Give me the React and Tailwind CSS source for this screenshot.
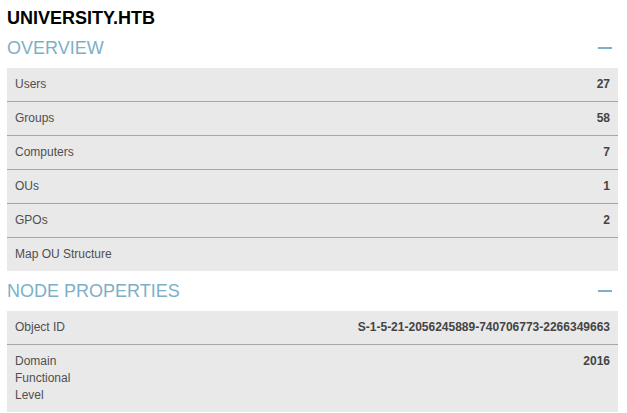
const overview = [
  { label: "Users", value: "27" },
  { label: "Groups", value: "58" },
  { label: "Computers", value: "7" },
  { label: "OUs", value: "1" },
  { label: "GPOs", value: "2" },
  { label: "Map OU Structure", value: "" },
]

const props = [
  { label: "Object ID", value: "S-1-5-21-2056245889-740706773-2266349663" },
  { label: "Domain Functional Level", value: "2016" },
]

function Heading({ title }) {
  return (
    <div className="flex items-center justify-between h-[22px] pr-[6px]">
      <h2 className="text-[18px] leading-[22px] text-[#7db0c7]">{title}</h2>
      <div className="w-[14px] h-[2px] bg-[#7db0c7]" />
    </div>
  )
}

function Row({ label, value, last, narrow }) {
  return (
    <div className={`flex justify-between bg-[#e9e9e9] px-[8px] py-[8px] text-[12px] leading-[17px] ${last ? "" : "border-b border-[#a6a6a6]"}`}>
      <span className={`text-[#4f4f4f] ${narrow ? "w-[70px]" : ""}`}>{label}</span>
      <span className="font-bold text-[#444]">{value}</span>
    </div>
  )
}

export default function App() {
  return (
    <div className="bg-white w-[627px] h-[413px] overflow-hidden pl-[7px] pr-[9px] pt-[7px] font-['Liberation_Sans',Arial,sans-serif]">
      <h1 className="text-[18px] leading-[22px] font-bold text-black">UNIVERSITY.HTB</h1>
      <div className="mt-[8px]">
        <Heading title="OVERVIEW" />
      </div>
      <div className="mt-[9px]">
        {overview.map((r, i) => (
          <Row key={r.label} {...r} last={i === overview.length - 1} />
        ))}
      </div>
      <div className="mt-[9px]">
        <Heading title="NODE PROPERTIES" />
      </div>
      <div className="mt-[9px]">
        {props.map((r, i) => (
          <Row key={r.label} {...r} last={i === props.length - 1} narrow={i === 1} />
        ))}
      </div>
    </div>
  )
}
